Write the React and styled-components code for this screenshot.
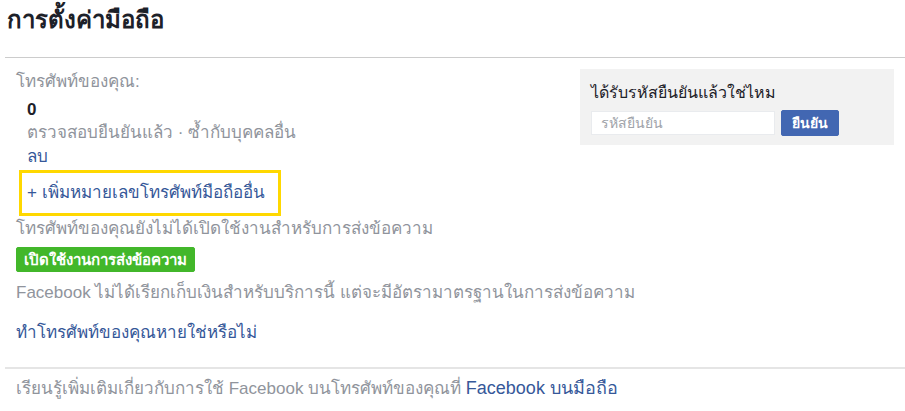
import React from "react";
import styled, { createGlobalStyle } from "styled-components";

const GlobalStyle = createGlobalStyle`
    body {
        margin: 0;
        background: #fff;
        font-family: "Liberation Sans", "Noto Sans", Tahoma, sans-serif;
        color: #1d2129;
    }
`

const Page = styled.div`
    width: 905px;
    height: 411px;
    overflow: hidden;
`

const Title = styled.h2`
    margin: 0;
    padding: 6px 0 0 7px;
    height: 57px;
    box-sizing: border-box;
    font-size: 24px;
    line-height: 28px;
    font-weight: bold;
    color: #1d2129;
`

const Divider = styled.div`
    margin-left: 5px;
    border-top: ${props => props.light ? '2px solid #e5e5e5' : '1px solid #cccccc'};
`

const Body = styled.div`
    padding: 11px 11px 0 16px;
    height: 309px;
    box-sizing: border-box;
`

const Left = styled.div`
    display: flex;
    flex-direction: column;
    padding-top: 1px;
`

const Gray = styled.div`
    color: #90949c;
    font-size: 17px;
    line-height: 24px;
    white-space: nowrap;
    padding-left: ${props => props.indent ? '11px' : '0'};
    margin-top: ${props => props.mt || 0}px;
`

const Number = styled.div`
    font-weight: bold;
    font-size: 17px;
    line-height: 22px;
    padding-left: 11px;
    margin-top: 5px;
`

const Link = styled.a`
    display: ${props => props.inline ? 'inline' : 'block'};
    color: #365899;
    font-size: ${props => props.inline ? '18px' : '17px'};
    line-height: 24px;
    text-decoration: none;
    cursor: pointer;
    padding-left: ${props => props.indent ? '11px' : '0'};
    margin-top: ${props => props.mt || 0}px;
`

const Highlight = styled.div`
    align-self: flex-start;
    margin: 1px 0 0 3px;
    padding: 8px 13px 8px 5px;
    border: 3px solid #ffd800;
    color: #365899;
    font-size: 17px;
    line-height: 24px;
`

const GreenButton = styled.button`
    align-self: flex-start;
    margin: 6px 0 0;
    height: 25px;
    padding: 0 7px;
    border: 1px solid #42b72a;
    border-radius: 2px;
    background: #42b72a;
    color: #fff;
    font-family: inherit;
    font-size: 15px;
    font-weight: bold;
`

const CodeBox = styled.div`
    float: right;
    width: 314px;
    height: 76px;
    box-sizing: border-box;
    padding: 12px 12px 0 11px;
    background: #f2f2f2;
`

const CodeTitle = styled.div`
    font-size: 16px;
    color: #1d2129;
    line-height: 24px;
`

const CodeRow = styled.div`
    display: flex;
    align-items: center;
    gap: 6px;
    margin-top: 5px;
`

const CodeInput = styled.input`
    width: 184px;
    height: 24px;
    box-sizing: border-box;
    border: 1px solid #e9ebee;
    background: #fff;
    padding: 0 9px;
    font-family: Tahoma, "Liberation Sans", sans-serif;
    font-size: 14px;
    outline: 0;

    &::placeholder {
        color: #a0a3a9;
    }
`

const BlueButton = styled.button`
    height: 26px;
    padding: 0 10px;
    border: 1px solid #4267b2;
    border-radius: 2px;
    background: #4267b2;
    color: #fff;
    font-family: inherit;
    font-size: 14px;
    font-weight: bold;
`

const Footer = styled.div`
    padding: 7px 0 0 16px;
    font-size: 17px;
    line-height: 24px;
    color: #90949c;
`

const App = () => (
    <Page>
        <GlobalStyle />
        <Title>การตั้งค่ามือถือ</Title>
        <Divider />
        <Body>
            <CodeBox>
                <CodeTitle>ได้รับรหัสยืนยันแล้วใช่ไหม</CodeTitle>
                <CodeRow>
                    <CodeInput placeholder="รหัสยืนยัน" />
                    <BlueButton>ยืนยัน</BlueButton>
                </CodeRow>
            </CodeBox>
            <Left>
                <Gray>โทรศัพท์ของคุณ:</Gray>
                <Number>0</Number>
                <Gray indent>ตรวจสอบยืนยันแล้ว · ซ้ำกับบุคคลอื่น</Gray>
                <Link indent>ลบ</Link>
                <Highlight>+ เพิ่มหมายเลขโทรศัพท์มือถืออื่น</Highlight>
                <Gray mt={1}>โทรศัพท์ของคุณยังไม่ได้เปิดใช้งานสำหรับการส่งข้อความ</Gray>
                <GreenButton>เปิดใช้งานการส่งข้อความ</GreenButton>
                <Gray mt={9}>Facebook ไม่ได้เรียกเก็บเงินสำหรับบริการนี้ แต่จะมีอัตรามาตรฐานในการส่งข้อความ</Gray>
                <Link mt={16}>ทำโทรศัพท์ของคุณหายใช่หรือไม่</Link>
            </Left>
        </Body>
        <Divider light />
        <Footer>
            เรียนรู้เพิ่มเติมเกี่ยวกับการใช้ Facebook บนโทรศัพท์ของคุณที่ <Link inline>Facebook บนมือถือ</Link>
        </Footer>
    </Page>
)

export default App;
